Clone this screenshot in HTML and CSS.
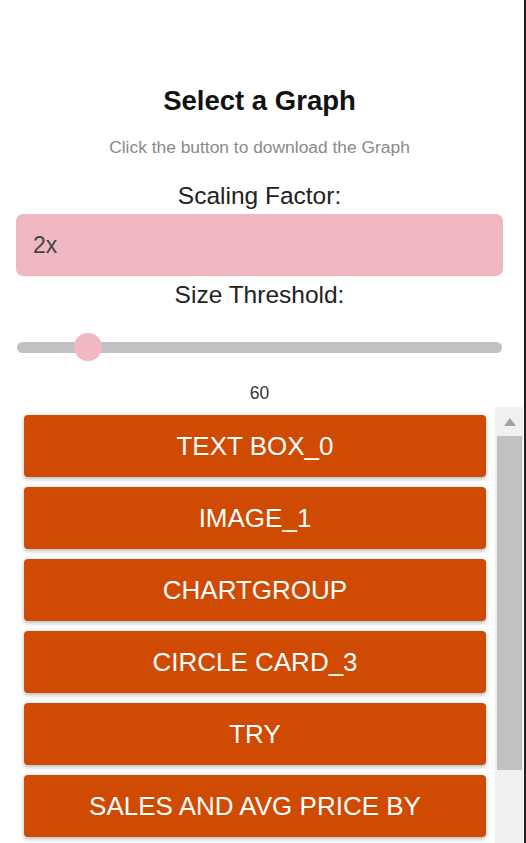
FILE: index.html
```html
<!DOCTYPE html>
<html lang="en">
<head>
<meta charset="utf-8">
<title>Select a Graph</title>
<link rel="stylesheet" href="styles.css">
</head>
<body>
<div class="frame">
  <main class="panel">
    <h1 class="title">Select a Graph</h1>
    <p class="subtitle">Click the button to download the Graph</p>
    <label class="field-label">Scaling Factor:</label>
    <div class="select">2x</div>
    <label class="field-label field-label--size">Size Threshold:</label>
    <div class="slider">
      <div class="slider-track"></div>
      <div class="slider-thumb"></div>
    </div>
    <div class="slider-value">60</div>
    <div class="list">
      <div class="list-items">
        <button class="graph-btn">TEXT BOX_0</button>
        <button class="graph-btn">IMAGE_1</button>
        <button class="graph-btn">CHARTGROUP</button>
        <button class="graph-btn">CIRCLE CARD_3</button>
        <button class="graph-btn">TRY</button>
        <button class="graph-btn">SALES AND AVG PRICE BY</button>
      </div>
      <div class="scrollbar">
        <div class="scroll-arrow"></div>
        <div class="scroll-thumb"></div>
      </div>
    </div>
  </main>
  <div class="edge"></div>
</div>
</body>
</html>
```
FILE: styles.css
```css
html, body {
  margin: 0;
  padding: 0;
  background: #ffffff;
  height: 100%;
  overflow: hidden;
}

.frame {
  display: flex;
  height: 843px;
}

.panel {
  width: 524px;
  box-sizing: border-box;
  padding: 85px 21px 0 16px;
  display: flex;
  flex-direction: column;
  font-family: "Liberation Sans", Arial, sans-serif;
  overflow: hidden;
}

.edge {
  width: 2px;
  background: #202124;
}

.title {
  margin: 0;
  font-size: 27.5px;
  line-height: 32px;
  font-weight: bold;
  color: #111111;
  text-align: center;
}

.subtitle {
  margin: 20px 0 0;
  font-size: 17.4px;
  line-height: 20px;
  color: #8a8a8a;
  text-align: center;
}

.field-label {
  display: block;
  margin-top: 25px;
  font-size: 24.5px;
  line-height: 28px;
  color: #222222;
  text-align: center;
}

.field-label--size {
  margin-top: 5px;
}

.select {
  margin-top: 4px;
  height: 62px;
  box-sizing: border-box;
  padding: 0 17px;
  display: flex;
  align-items: center;
  background: #f0b8c1;
  border-radius: 7px;
  font-size: 23px;
  color: #444444;
}

.slider {
  position: relative;
  margin-top: 24px;
  height: 28px;
  display: flex;
  align-items: center;
  padding: 0 1px;
}

.slider-track {
  flex: 1;
  height: 11px;
  border-radius: 6px;
  background: #c2c0c3;
}

.slider-thumb {
  position: absolute;
  left: 58px;
  top: 0;
  width: 28px;
  height: 28px;
  border-radius: 50%;
  background: #f0b8c1;
}

.slider-value {
  margin-top: 22px;
  font-size: 17.5px;
  line-height: 20px;
  color: #333333;
  text-align: center;
}

.list {
  margin-top: 4px;
  margin-right: -20px;
  flex: 1;
  display: flex;
  min-height: 0;
}

.list-items {
  flex: 1;
  display: flex;
  flex-direction: column;
  gap: 10px;
  padding: 8px 9px 0 8px;
  overflow: hidden;
}

.graph-btn {
  flex: none;
  height: 62px;
  border: none;
  border-radius: 4px;
  background: #cf4a02;
  color: #ffffff;
  font-family: "Liberation Sans", Arial, sans-serif;
  font-size: 26px;
  box-shadow: 0 2px 4px rgba(0, 0, 0, 0.28);
  padding: 0;
}

.scrollbar {
  width: 28px;
  background: #f0f0f0;
  display: flex;
  flex-direction: column;
  align-items: stretch;
}

.scroll-arrow {
  align-self: center;
  margin-top: 11px;
  margin-left: 1px;
  width: 0;
  height: 0;
  border-left: 6.5px solid transparent;
  border-right: 6.5px solid transparent;
  border-bottom: 8px solid #a3a3a3;
}

.scroll-thumb {
  margin: 10px 1px 0 2px;
  height: 334px;
  background: #c1c1c1;
}
```
